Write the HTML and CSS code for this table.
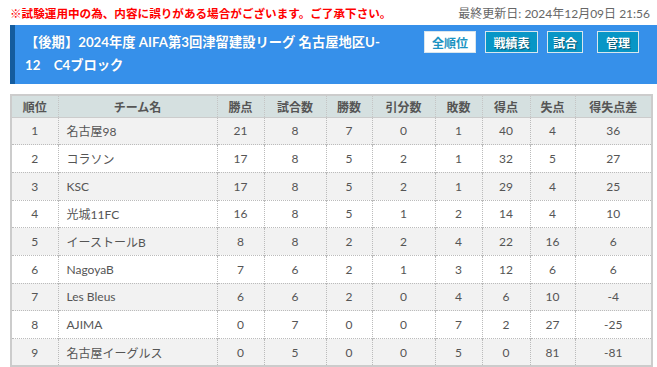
FILE: index.html
```html
<!DOCTYPE html>
<html lang="ja">
<head>
<meta charset="utf-8">
<link rel="stylesheet" href="styles.css">
</head>
<body>
<div class="topline">
  <span class="notice">※試験運用中の為、内容に誤りがある場合がございます。ご了承下さい。</span>
  <span class="updated">最終更新日: 2024年12月09日 21:56</span>
</div>
<div class="banner">
  <h1 class="title">【後期】2024年度 AIFA第3回津留建設リーグ 名古屋地区U-<br>12　C4ブロック</h1>
  <div class="btns">
    <a class="btn btn-active btn-w52">全順位</a>
    <a class="btn btn-w53">戦績表</a>
    <a class="btn btn-w36">試合</a>
    <a class="btn btn-w42 btn-last">管理</a>
  </div>
</div>
<table class="standings">
  <colgroup>
    <col style="width:47px"><col style="width:159px"><col style="width:47px"><col style="width:62px"><col style="width:46px"><col style="width:63px"><col style="width:47px"><col style="width:48px"><col style="width:45px"><col>
  </colgroup>
  <thead>
    <tr><th>順位</th><th>チーム名</th><th>勝点</th><th>試合数</th><th>勝数</th><th>引分数</th><th>敗数</th><th>得点</th><th>失点</th><th>得失点差</th></tr>
  </thead>
  <tbody>
    <tr><td>1</td><td class="name">名古屋98</td><td>21</td><td>8</td><td>7</td><td>0</td><td>1</td><td>40</td><td>4</td><td>36</td></tr>
    <tr><td>2</td><td class="name">コラソン</td><td>17</td><td>8</td><td>5</td><td>2</td><td>1</td><td>32</td><td>5</td><td>27</td></tr>
    <tr><td>3</td><td class="name">KSC</td><td>17</td><td>8</td><td>5</td><td>2</td><td>1</td><td>29</td><td>4</td><td>25</td></tr>
    <tr><td>4</td><td class="name">光城11FC</td><td>16</td><td>8</td><td>5</td><td>1</td><td>2</td><td>14</td><td>4</td><td>10</td></tr>
    <tr><td>5</td><td class="name">イーストールB</td><td>8</td><td>8</td><td>2</td><td>2</td><td>4</td><td>22</td><td>16</td><td>6</td></tr>
    <tr><td>6</td><td class="name">NagoyaB</td><td>7</td><td>6</td><td>2</td><td>1</td><td>3</td><td>12</td><td>6</td><td>6</td></tr>
    <tr><td>7</td><td class="name">Les Bleus</td><td>6</td><td>6</td><td>2</td><td>0</td><td>4</td><td>6</td><td>10</td><td>-4</td></tr>
    <tr><td>8</td><td class="name">AJIMA</td><td>0</td><td>7</td><td>0</td><td>0</td><td>7</td><td>2</td><td>27</td><td>-25</td></tr>
    <tr><td>9</td><td class="name">名古屋イーグルス</td><td>0</td><td>5</td><td>0</td><td>0</td><td>5</td><td>0</td><td>81</td><td>-81</td></tr>
  </tbody>
</table>
</body>
</html>
```
FILE: styles.css
```css
* { box-sizing: border-box; }
html, body { margin: 0; padding: 0; background: #fff; }
body {
  font-family: Lato, "Noto Sans CJK JP", sans-serif;
  color: #555;
  font-size: 12px;
}
.topline {
  display: flex;
  justify-content: space-between;
  align-items: center;
  height: 25px;
  padding: 0 7px 0 10px;
}
.notice {
  color: #f00;
  font-weight: bold;
  font-size: 11.6px;
}
.updated {
  color: #666;
  font-size: 12px;
}
.banner {
  margin-left: 10px;
  height: 59px;
  background: #3690ea;
  border-left: 5px solid #145c9e;
  display: flex;
  justify-content: space-between;
  align-items: flex-start;
  padding: 6px 18px 0 10px;
}
.title {
  margin: 0;
  color: #fff;
  font-size: 13.3px;
  font-weight: bold;
  line-height: 23px;
  padding-top: 0;
  text-shadow: 0 0 1px rgba(0,0,0,0.15);
}
.btns {
  display: flex;
  gap: 9px;
}
.btn {
  display: flex;
  align-items: center;
  justify-content: center;
  height: 22px;
  padding: 0;
  background: #0896c6;
  border: 1px solid #d8e6ee;
  color: #fff;
  font-weight: bold;
  font-size: 12px;
  text-shadow: 1px 1px 1px rgba(0,0,0,0.45);
}
.btn-w52 { width: 52px; }
.btn-w53 { width: 53px; }
.btn-w36 { width: 36px; }
.btn-w42 { width: 42px; }
.btn-last { margin-left: 5px; }
.btn-active {
  background: #fff;
  color: #1a93c2;
  text-shadow: none;
}
.standings {
  margin: 10px 0 0 10px;
  width: 643px;
  border-collapse: collapse;
  table-layout: fixed;
  border: 2px solid #ccc;
}
.standings th {
  background: #d5e0e0;
  color: #555;
  font-weight: bold;
  height: 22px;
  font-size: 12px;
  border-left: 1px dotted #c4c4c4;
  border-bottom: 1px solid #ccc;
  text-align: center;
  padding: 0;
}
.standings td {
  height: 27.7px;
  text-align: center;
  padding: 0;
  border-left: 1px dotted #bbb;
  border-top: 1px dotted #bbb;
  color: #555;
}
.standings tbody tr:nth-child(odd) td { background: #f2f2f2; }
.standings td.name { text-align: left; padding-left: 8px; }
```
